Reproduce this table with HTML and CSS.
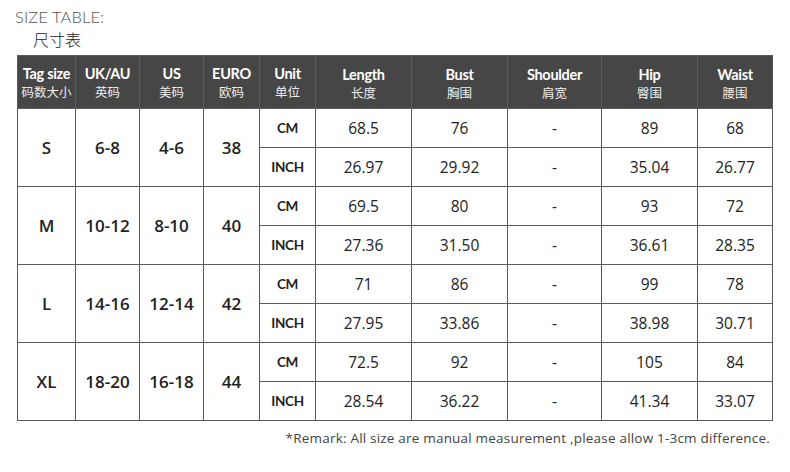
FILE: index.html
```html
<!DOCTYPE html>
<html>
<head>
<meta charset="utf-8">
<link rel="stylesheet" href="styles.css">
</head>
<body>
<div class="page">
  <div class="title-en">SIZE TABLE:</div>
  <div class="title-cn">尺寸表</div>
  <table class="size-table">
    <colgroup>
      <col class="c1"><col class="c2"><col class="c3"><col class="c4"><col class="c5">
      <col class="c6"><col class="c7"><col class="c8"><col class="c9"><col class="c10">
    </colgroup>
    <thead>
      <tr>
        <th><span class="en">Tag size</span><span class="cn">码数大小</span></th>
        <th><span class="en">UK/AU</span><span class="cn">英码</span></th>
        <th><span class="en">US</span><span class="cn">美码</span></th>
        <th><span class="en">EURO</span><span class="cn">欧码</span></th>
        <th><span class="en">Unit</span><span class="cn">单位</span></th>
        <th class="low"><span class="en">Length</span><span class="cn">长度</span></th>
        <th class="low"><span class="en">Bust</span><span class="cn">胸围</span></th>
        <th class="low"><span class="en">Shoulder</span><span class="cn">肩宽</span></th>
        <th class="low"><span class="en">Hip</span><span class="cn">臀围</span></th>
        <th class="low"><span class="en">Waist</span><span class="cn">腰围</span></th>
      </tr>
    </thead>
    <tbody>
      <tr>
        <td rowspan="2" class="size">S</td><td rowspan="2" class="big">6-8</td><td rowspan="2" class="big">4-6</td><td rowspan="2" class="big">38</td>
        <td class="unit">CM</td><td>68.5</td><td>76</td><td>-</td><td>89</td><td>68</td>
      </tr>
      <tr>
        <td class="unit">INCH</td><td>26.97</td><td>29.92</td><td>-</td><td>35.04</td><td>26.77</td>
      </tr>
      <tr>
        <td rowspan="2" class="size">M</td><td rowspan="2" class="big">10-12</td><td rowspan="2" class="big">8-10</td><td rowspan="2" class="big">40</td>
        <td class="unit">CM</td><td>69.5</td><td>80</td><td>-</td><td>93</td><td>72</td>
      </tr>
      <tr>
        <td class="unit">INCH</td><td>27.36</td><td>31.50</td><td>-</td><td>36.61</td><td>28.35</td>
      </tr>
      <tr>
        <td rowspan="2" class="size">L</td><td rowspan="2" class="big">14-16</td><td rowspan="2" class="big">12-14</td><td rowspan="2" class="big">42</td>
        <td class="unit">CM</td><td>71</td><td>86</td><td>-</td><td>99</td><td>78</td>
      </tr>
      <tr>
        <td class="unit">INCH</td><td>27.95</td><td>33.86</td><td>-</td><td>38.98</td><td>30.71</td>
      </tr>
      <tr>
        <td rowspan="2" class="size">XL</td><td rowspan="2" class="big">18-20</td><td rowspan="2" class="big">16-18</td><td rowspan="2" class="big">44</td>
        <td class="unit">CM</td><td>72.5</td><td>92</td><td>-</td><td>105</td><td>84</td>
      </tr>
      <tr>
        <td class="unit">INCH</td><td>28.54</td><td>36.22</td><td>-</td><td>41.34</td><td>33.07</td>
      </tr>
    </tbody>
  </table>
  <div class="remark">*Remark: All size are manual measurement ,please allow 1-3cm difference.</div>
</div>
</body>
</html>
```

FILE: styles.css
```css
* { box-sizing: border-box; }
html, body { margin: 0; padding: 0; background: #ffffff; }
body {
  font-family: "Open Sans", "Noto Sans", "Noto Sans CJK SC", sans-serif;
  color: #222;
}
.page {
  width: 790px;
  height: 472px;
  padding: 8px 0 0 0;
}
.title-en {
  margin-left: 15px;
  font-family: Lato, sans-serif;
  font-size: 16.5px;
  font-weight: 300;
  color: #555;
  line-height: 19px;
  letter-spacing: 0.1px;
}
.title-cn {
  margin-left: 33px;
  margin-top: 3px;
  font-family: "Noto Sans CJK SC", sans-serif;
  font-size: 16px;
  font-weight: 300;
  line-height: 18px;
  color: #222;
}
.size-table {
  margin: 7px 0 0 17px;
  border-collapse: collapse;
  table-layout: fixed;
  width: 755px;
}
.c1 { width: 58px; }
.c2 { width: 64px; }
.c3 { width: 64px; }
.c4 { width: 56px; }
.c5 { width: 56px; }
.c6 { width: 96px; }
.c7 { width: 96px; }
.c8 { width: 94px; }
.c9 { width: 96px; }
.c10 { width: 75px; }
.size-table th, .size-table td {
  border: 1px solid #5a5a5a;
  padding: 0;
  text-align: center;
  vertical-align: middle;
}
.size-table thead tr { height: 53px; }
.size-table th {
  background: #464646;
  color: #ffffff;
  font-family: Lato, sans-serif;
  font-weight: 700;
  padding-top: 0;
}
.size-table th.low { padding-top: 3px; }
.size-table th .en {
  display: block;
  font-size: 14.5px;
  line-height: 18px;
  letter-spacing: -0.3px;
}
.size-table th .cn {
  display: block;
  font-family: "Noto Sans CJK SC", sans-serif;
  font-weight: 400;
  font-size: 12.5px;
  line-height: 17px;
  color: #eeeeee;
}
.size-table tbody tr { height: 39px; }
.size-table td {
  font-size: 15.5px;
  color: #222;
}
.size-table td.size,
.size-table td.big {
  font-size: 17px;
  font-weight: 600;
  color: #222;
}
.size-table td.unit {
  font-family: Lato, sans-serif;
  font-size: 13.5px;
  font-weight: 700;
  letter-spacing: -0.3px;
}
.remark {
  margin: 8px 20px 0 0;
  text-align: right;
  font-size: 13.5px;
  color: #444;
  letter-spacing: 0.2px;
}
```
